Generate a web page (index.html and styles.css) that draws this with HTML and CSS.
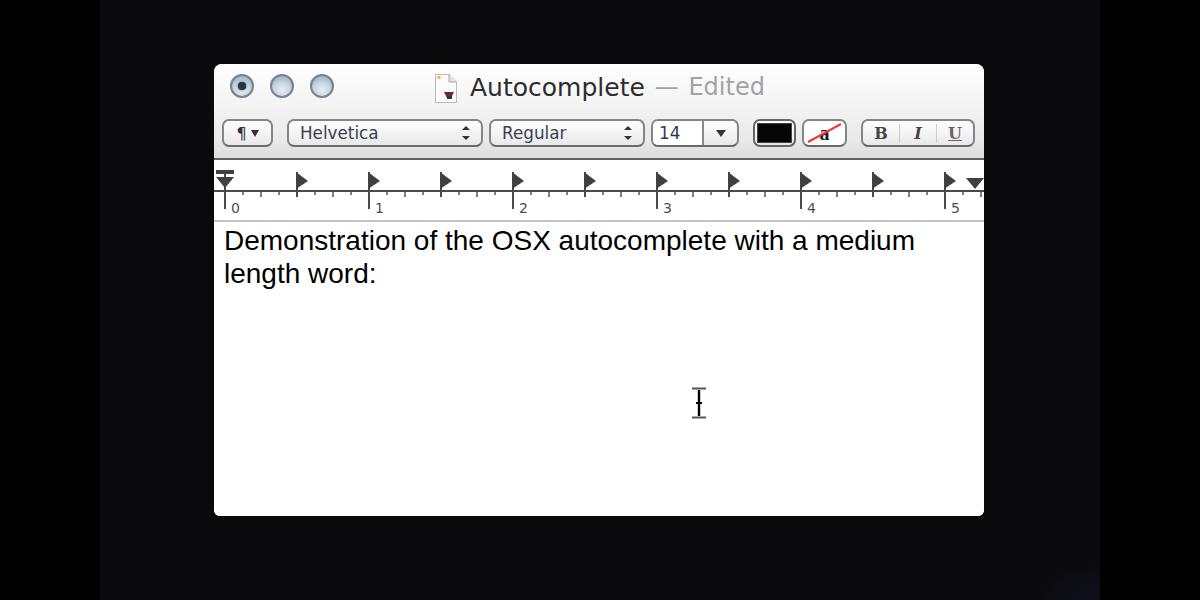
FILE: index.html
```html
<!DOCTYPE html>
<html lang="en">
<head>
<meta charset="utf-8">
<title>Autocomplete</title>
<link rel="stylesheet" href="styles.css">
</head>
<body>
<main class="stage">
  <section class="window">
    <header class="chrome">
      <div class="titlebar">
        <div class="lights">
          <span class="light light-dot"></span>
          <span class="light"></span>
          <span class="light"></span>
        </div>
        <div class="title">
          <svg class="doc" width="24" height="31" viewBox="0 0 24 31">
            <path d="M1.5 1.5H15L22.5 9V29.5H1.5Z" fill="#fbfbfb" stroke="#b9b9b9"/>
            <path d="M15 1.5V9H22.5" fill="#e4e4e4" stroke="#a8a8a8"/>
            <rect x="3.5" y="3" width="3" height="3" fill="#e8b860"/>
            <path d="M10 19H20L17 25H13Z" fill="#6e2a22"/>
            <path d="M13 23H18V26H13Z" fill="#3a3030"/>
          </svg>
          <span class="title-name">Autocomplete</span>
          <span class="title-edited">— Edited</span>
        </div>
      </div>
      <div class="toolbar">
        <div class="btn btn-para"><span class="para">¶</span><span class="tri tri-small"></span></div>
        <div class="btn select select-font"><span>Helvetica</span><span class="updown"><i class="up"></i><i class="down"></i></span></div>
        <div class="btn select select-style"><span>Regular</span><span class="updown"><i class="up"></i><i class="down"></i></span></div>
        <div class="btn combo"><span class="combo-value">14</span><span class="combo-arrow"><span class="tri"></span></span></div>
        <div class="btn well well-text"><span class="swatch"></span></div>
        <div class="btn well well-bg">
          <span class="nofill">a</span>
          <svg class="slash" width="35" height="20" viewBox="0 0 35 20"><path d="M1 19L34 1" stroke="#f03a30" stroke-width="2"/></svg>
        </div>
        <div class="btn biu">
          <span class="biu-b">B</span><span class="biu-i">I</span><span class="biu-u">U</span>
        </div>
      </div>
    </header>
    <div class="ruler">
      <svg width="770" height="60" viewBox="214 160 770 60">
        <g>
          <path d="M214 191H984" stroke="#4a4a4a" stroke-width="2"/>
          <path stroke="#4a4a4a" stroke-width="1.4" d="M243 191v4M261 191v6M279 191v4M315 191v4M333 191v6M351 191v4M387 191v4M405 191v6M423 191v4M459 191v4M477 191v6M495 191v4M531 191v4M549 191v6M567 191v4M603 191v4M621 191v6M639 191v4M675 191v4M693 191v6M711 191v4M747 191v4M765 191v6M783 191v4M819 191v4M837 191v6M855 191v4M891 191v4M909 191v6M927 191v4M963 191v4M981 191v6"/>
          <path stroke="#4a4a4a" stroke-width="2" d="M225 172v37M369 172v37M513 172v37M657 172v37M801 172v37M945 172v37M297 172v25M441 172v25M585 172v25M729 172v25M873 172v25"/>
        </g>
        <g fill="#404040">
          <path d="M216 170h18v4h-18zM216 177h18l-9 11z"/>
          <path d="M296 172l12 9-12 8zM368 172l12 9-12 8zM440 172l12 9-12 8zM512 172l12 9-12 8zM584 172l12 9-12 8zM656 172l12 9-12 8zM728 172l12 9-12 8zM800 172l12 9-12 8zM872 172l12 9-12 8zM944 172l12 9-12 8z"/>
          <path d="M966 178h18l-9 11z"/>
        </g>
        <g class="nums">
          <text x="231" y="213">0</text><text x="375" y="213">1</text><text x="519" y="213">2</text><text x="663" y="213">3</text><text x="807" y="213">4</text><text x="951" y="213">5</text>
        </g>
      </svg>
    </div>
    <div class="doc-body">
      <p class="doc-text">Demonstration of the OSX autocomplete with a medium length word:</p>
      <svg class="ibeam" width="14" height="32" viewBox="0 0 14 32">
        <path d="M0 1.5H14M0 30.5H14" stroke="#555" stroke-width="2"/>
        <path d="M7 3V29" stroke="#000" stroke-width="2.4"/>
        <path d="M4 16H10" stroke="#000" stroke-width="2"/>
      </svg>
    </div>
  </section>
</main>
</body>
</html>
```
FILE: styles.css
```css
* { box-sizing: border-box; }
html, body { margin: 0; height: 100%; }
body { background: #000; overflow: hidden; }
.stage {
  width: 1000px;
  height: 600px;
  margin: 0 auto;
  background: radial-gradient(70px 40px at 100% 100%, #10101e, #0a0a0c) #0a0a0c;
  padding: 64px 116px 84px 114px;
}
.window {
  width: 770px;
  height: 452px;
  border-radius: 8px 8px 6px 6px;
  overflow: hidden;
  background: #fff;
  display: flex;
  flex-direction: column;
}
.chrome {
  height: 96px;
  background: linear-gradient(#fefefe 0, #f4f4f4 40px, #eeeeee 60px, #e8e8e8 78px, #dcdcdc 94px);
  border-bottom: 2px solid #606060;
}
.titlebar {
  height: 46px;
  display: flex;
  position: relative;
  padding: 10px 0 0 16px;
}
.lights { display: flex; gap: 16px; }
.light {
  width: 24px;
  height: 24px;
  border-radius: 50%;
  border: 2px solid #75828f;
  background: radial-gradient(circle at 50% 70%, #e6eef4 0, #c8d6e2 45%, #97a9b9 90%);
  display: flex;
  align-items: center;
  justify-content: center;
}
.light-dot::after {
  content: "";
  width: 8px;
  height: 8px;
  border-radius: 50%;
  background: #2a3340;
  box-shadow: 0 0 2px #2a3340;
}
.title {
  display: flex;
  align-items: center;
  height: 26px;
  margin-left: 100px;
  font-family: "DejaVu Sans", sans-serif;
  font-size: 25px;
  white-space: nowrap;
}
.doc { margin-right: 12px; flex: none; margin-top: 2px; }
.title-name { color: #2c2c2c; }
.title-edited { color: #a2a2a2; margin-left: 10px; font-size: 24px; word-spacing: 2px; }
.toolbar {
  display: flex;
  align-items: center;
  padding: 9px 0 0 8px;
  font-family: "DejaVu Sans", sans-serif;
  font-size: 16.8px;
  color: #3a3f55;
}
.btn {
  height: 28px;
  border: 2px solid #858585;
  border-bottom-color: #6a6a6a;
  border-radius: 7px;
  background: linear-gradient(#fdfdfd, #f4f4f4 50%, #e8e8e8);
  display: flex;
  align-items: center;
  flex: none;
}
.tri {
  width: 0;
  height: 0;
  border-left: 5px solid transparent;
  border-right: 5px solid transparent;
  border-top: 7px solid #333;
}
.tri-small { border-left-width: 4px; border-right-width: 4px; }
.btn-para { width: 51px; justify-content: center; gap: 4px; margin-right: 14px; }
.para { color: #333; font-size: 16px; }
.select { justify-content: space-between; padding: 0 11px; }
.select-font { width: 196px; margin-right: 6px; }
.select-style { width: 156px; margin-right: 6px; }
.updown { display: flex; flex-direction: column; gap: 6px; }
.updown i { display: block; width: 0; height: 0; border-left: 4px solid transparent; border-right: 4px solid transparent; }
.updown .up { border-bottom: 4px solid #333; }
.updown .down { border-top: 4px solid #333; }
.combo { width: 88px; margin-right: 14px; overflow: hidden; color: #30385a; }
.combo-value { width: 49px; height: 100%; background: #fff; padding-left: 6px; line-height: 25px; }
.combo-arrow { flex: 1; height: 100%; border-left: 2px solid #8a8a8a; display: flex; align-items: center; justify-content: center; }
.well { justify-content: center; position: relative; }
.well-text { width: 43px; margin-right: 6px; padding: 2px; border-color: #666; }
.swatch { width: 100%; height: 100%; background: #060606; border: 1px solid #444; }
.well-bg { width: 45px; margin-right: 14px; background: #fff; }
.nofill { font-family: "Liberation Serif", serif; font-weight: bold; font-size: 20px; color: #1a1a3a; line-height: 20px; }
.slash { position: absolute; left: 3px; top: 2px; }
.biu { width: 114px; font-family: "DejaVu Serif", serif; font-size: 16px; color: #444; }
.biu span { flex: 1; text-align: center; font-weight: bold; }
.biu-i { font-style: italic; border-left: 1px solid #ccc; border-right: 1px solid #ccc; }
.biu-u { text-decoration: underline; font-weight: normal; color: #666; }
.ruler {
  height: 62px;
  background: #fff;
  border-bottom: 2px solid #c4c4c4;
  flex: none;
}
.ruler svg { display: block; }
.nums text { font-family: "DejaVu Sans", sans-serif; font-size: 14px; fill: #4d4d5a; }
.doc-body { flex: 1; position: relative; padding: 2px 10px; background: #fff; }
.doc-text {
  margin: 0;
  width: 720px;
  font-family: "Liberation Sans", sans-serif;
  font-size: 28px;
  line-height: 33px;
  color: #000;
}
.ibeam { position: absolute; left: 478px; top: 165px; }
```
